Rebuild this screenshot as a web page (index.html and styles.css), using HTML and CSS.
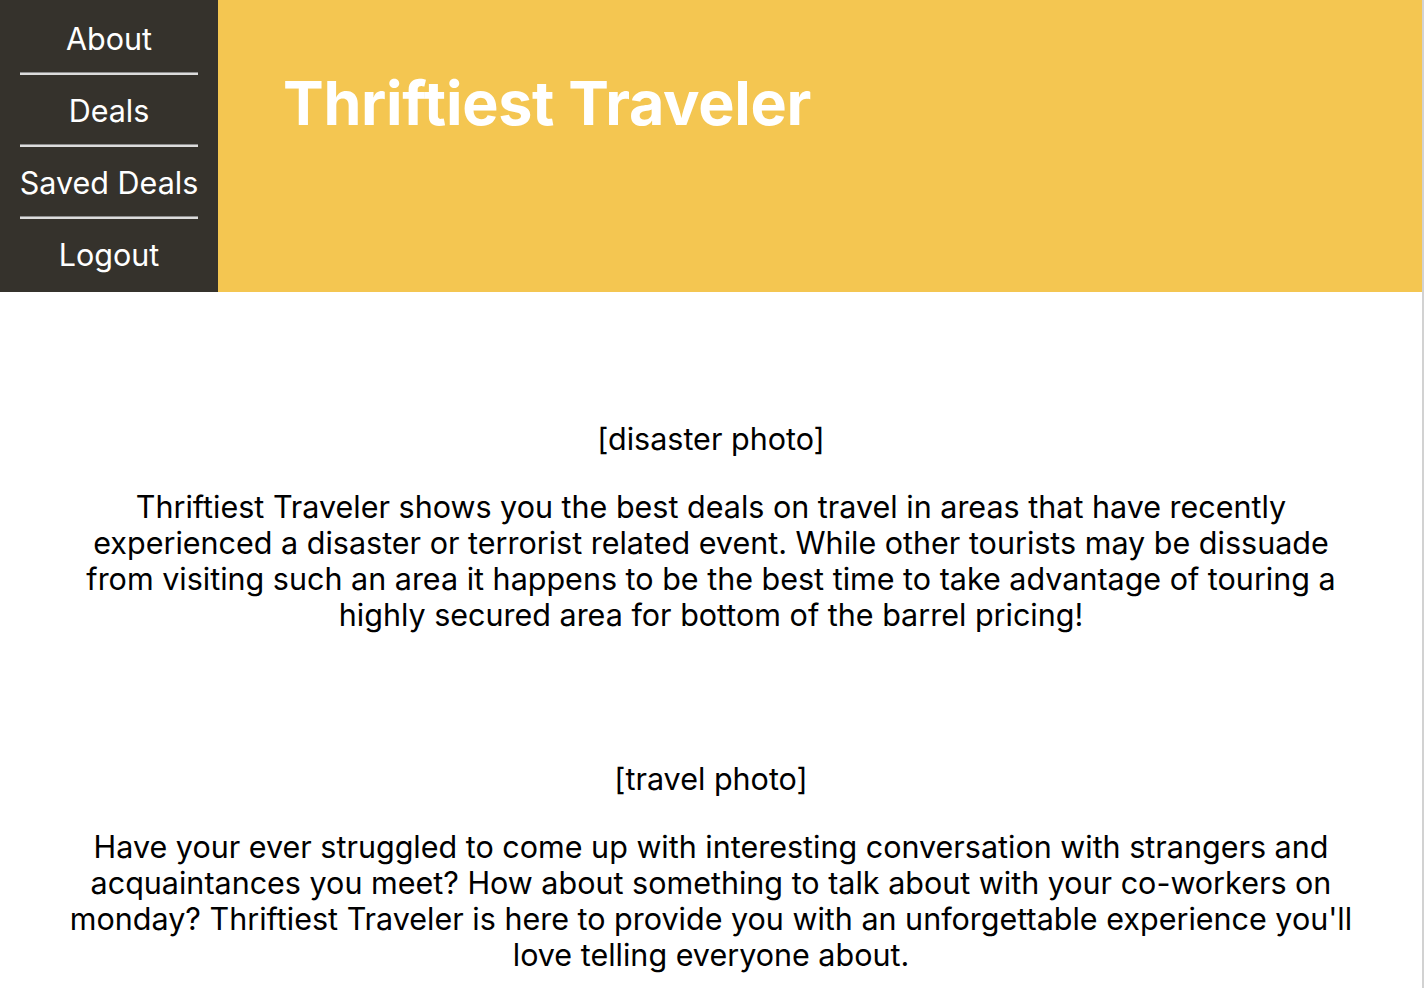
FILE: index.html
```html
<!DOCTYPE html>
<html lang="en">
<head>
<meta charset="utf-8">
<title>Thriftiest Traveler</title>
<link rel="stylesheet" href="styles.css">
</head>
<body>
<div class="page">
  <header class="top">
    <nav class="nav">
      <a class="nav-link" href="#">About</a>
      <hr class="nav-rule">
      <a class="nav-link" href="#">Deals</a>
      <hr class="nav-rule">
      <a class="nav-link" href="#">Saved Deals</a>
      <hr class="nav-rule">
      <a class="nav-link" href="#">Logout</a>
    </nav>
    <div class="banner">
      <h1 class="title">Thriftiest Traveler</h1>
    </div>
  </header>
  <main class="content">
    <section class="block">
      <p class="photo">[disaster photo]</p>
      <p class="text">Thriftiest Traveler shows you the best deals on travel in areas that have recently experienced a disaster or terrorist related event. While other tourists may be dissuade from visiting such an area it happens to be the best time to take advantage of touring a highly secured area for bottom of the barrel pricing!</p>
    </section>
    <section class="block">
      <p class="photo">[travel photo]</p>
      <p class="text">Have your ever struggled to come up with interesting conversation with strangers and acquaintances you meet? How about something to talk about with your co-workers on monday? Thriftiest Traveler is here to provide you with an unforgettable experience you'll love telling everyone about.</p>
    </section>
  </main>
</div>
</body>
</html>
```
FILE: styles.css
```css
html, body {
  margin: 0;
  padding: 0;
  background: #ffffff;
}
body {
  font-family: Inter, "Noto Sans", "Liberation Sans", sans-serif;
  color: #000;
  overflow: hidden;
}
.page {
  width: 1422px;
  min-height: 988px;
  border-right: 2px solid #d2d2d2;
}
.top {
  display: flex;
  height: 292px;
}
.nav {
  width: 218px;
  flex: none;
  background: #35322c;
  display: flex;
  flex-direction: column;
  padding-top: 3px;
  box-sizing: border-box;
}
.nav-link {
  display: block;
  color: #ffffff;
  text-decoration: none;
  text-align: center;
  font-size: 30.5px;
  line-height: 34px;
  padding: 19px 0 16px;
  height: 34px;
}
.nav-rule {
  margin: 0 20px;
  height: 0;
  border: 0;
  border-top: 1px solid #8e8e8e;
  border-bottom: 2px solid #dcdcdc;
}
.banner {
  flex: 1;
  background: #f4c651;
  padding: 66px 0 0 65px;
}
.title {
  margin: 0;
  color: #ffffff;
  font-weight: 700;
  font-size: 61px;
  line-height: 75px;
  letter-spacing: -0.3px;
}
.content {
  width: 1302px;
  margin: 0 auto;
  padding: 129px 0 0;
  display: flex;
  flex-direction: column;
  gap: 128px;
  text-align: center;
}
.block p {
  margin: 0;
  font-size: 30.5px;
  line-height: 36px;
}
.photo {
  margin-bottom: 32px !important;
}
```
